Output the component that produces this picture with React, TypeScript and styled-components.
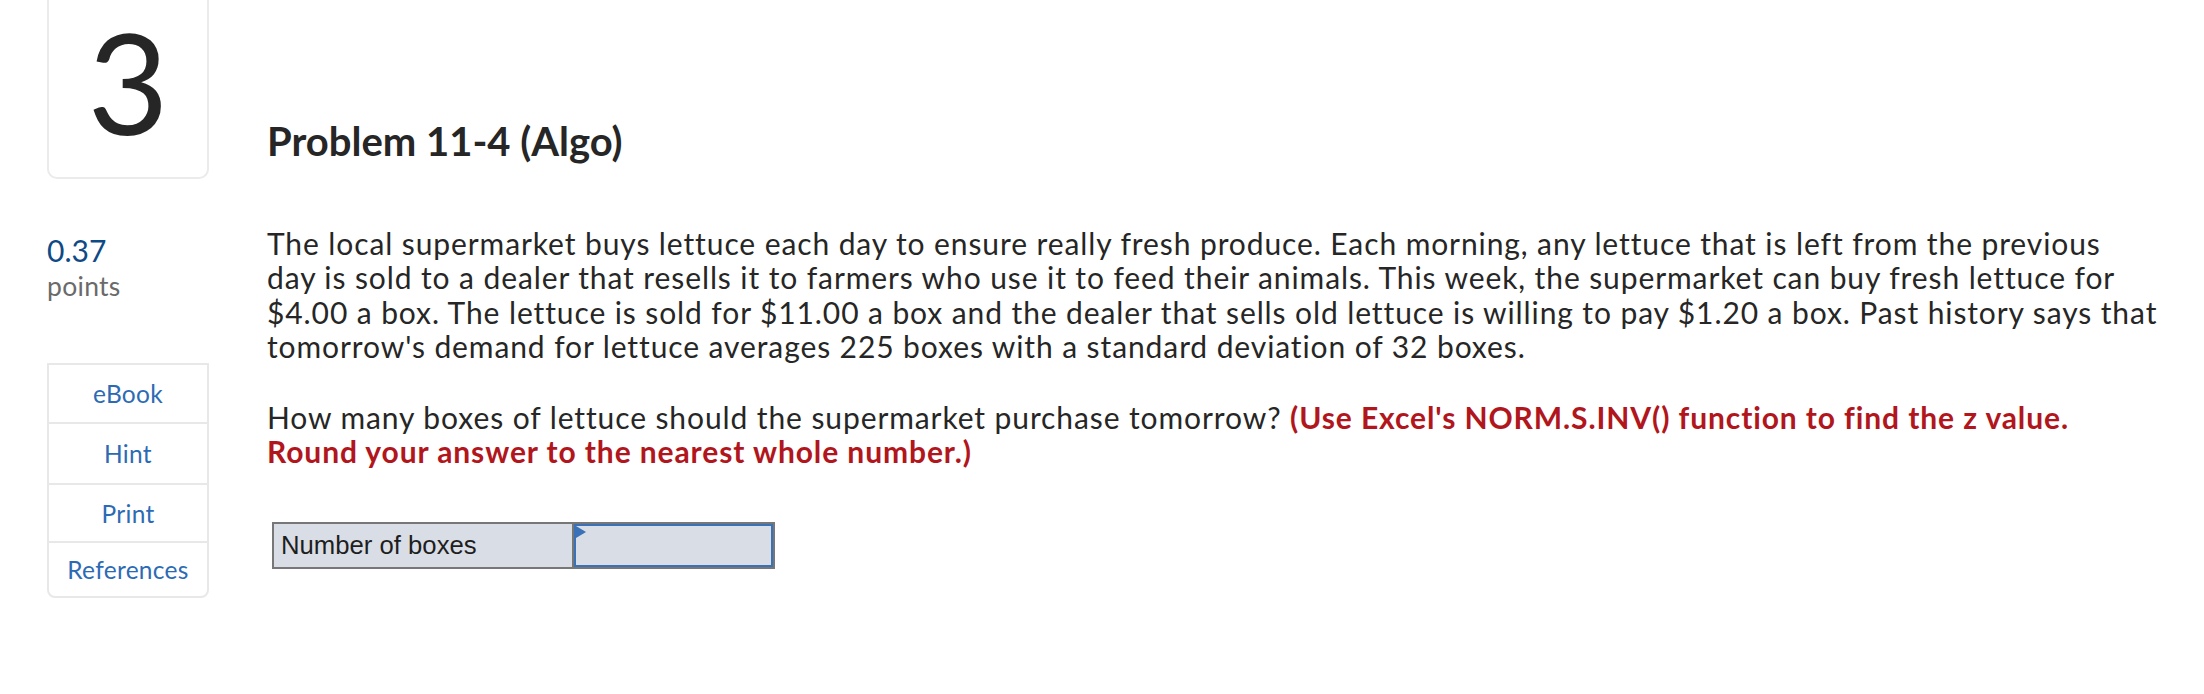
import React from "react";
import styled, { createGlobalStyle } from "styled-components";

const Global = createGlobalStyle`
  html, body { margin: 0; padding: 0; background: #ffffff; }
  body { font-family: Lato, "Open Sans", sans-serif; color: #262626; }
`;

const Page = styled.div`
  display: grid;
  grid-template-columns: 162px 1fr;
  column-gap: 58px;
  padding: 0 10px 0 47px;
  width: 2204px;
  box-sizing: border-box;
`;

const NumberCard = styled.div`
  height: 179px;
  box-sizing: border-box;
  border: 2px solid #ebebeb;
  border-top: none;
  border-radius: 0 0 10px 10px;
  display: flex;
  justify-content: center;
  padding-top: 11px;
  font-size: 140px;
  line-height: 140px;
  font-weight: 400;
  color: #262626;
`;

const Title = styled.h1`
  margin: 0;
  padding-top: 117px;
  font-size: 40px;
  line-height: 48px;
  font-weight: 700;
  color: #262626;
`;

const Sidebar = styled.aside`
  padding-top: 54px;
  display: flex;
  flex-direction: column;
`;

const Score = styled.div`
  font-size: 30px;
  line-height: 34px;
  color: #0e4a86;
`;

const ScoreUnit = styled.div`
  margin-top: 4px;
  font-size: 26.5px;
  line-height: 30px;
  letter-spacing: 0.3px;
  color: #6a6a6a;
`;

const ToolList = styled.nav`
  margin-top: 62px;
  border: 2px solid #e8e8e8;
  border-radius: 0 0 8px 8px;
  display: flex;
  flex-direction: column;
`;

const ToolButton = styled.a<{ $h: number }>`
  height: ${(p) => p.$h}px;
  display: flex;
  align-items: center;
  justify-content: center;
  font-size: 24.5px;
  letter-spacing: 0.3px;
  color: #2c6bb4;
  text-decoration: none;
  & + & {
    border-top: 2px solid #e8e8e8;
  }
`;

const Content = styled.main`
  padding-top: 47px;
`;

const Para = styled.p<{ $gap: number }>`
  margin: 0 0 ${(p) => p.$gap}px 0;
  font-size: 30px;
  line-height: 34.3px;
  letter-spacing: 0.9px;
  white-space: nowrap;
  color: #262626;
`;

const Emph = styled.strong`
  color: #b1161d;
  font-weight: 700;
`;

const AnswerTable = styled.table`
  margin-left: 5px;
  border-collapse: collapse;
  border: 2px solid #777777;
  font-family: "Liberation Sans", Arial, sans-serif;
  font-size: 25.7px;
  color: #1e1e1e;
`;

const LabelCell = styled.td`
  width: 300px;
  height: 43px;
  box-sizing: border-box;
  padding: 0 0 0 7px;
  background: #d9dde5;
  border-right: 2px solid #777777;
`;

const InputCell = styled.td`
  width: 199px;
  padding: 0;
  background: #d9dde5;
  position: relative;
`;

const AnswerInput = styled.input`
  display: block;
  width: 199px;
  height: 43px;
  box-sizing: border-box;
  border: 2px solid #3a72b8;
  background: #d9dde5;
  outline: none;
  margin: 0;
`;

const Flag = styled.span`
  position: absolute;
  left: 2px;
  top: 2px;
  width: 0;
  height: 0;
  border-top: 6.5px solid transparent;
  border-bottom: 6.5px solid transparent;
  border-left: 10px solid #3a72b8;
`;

export default function App() {
  return (
    <>
      <Global />
      <Page>
        <NumberCard>3</NumberCard>
        <Title>Problem 11-4 (Algo)</Title>
        <Sidebar>
          <Score>0.37</Score>
          <ScoreUnit>points</ScoreUnit>
          <ToolList>
            <ToolButton $h={57}>eBook</ToolButton>
            <ToolButton $h={59}>Hint</ToolButton>
            <ToolButton $h={56}>Print</ToolButton>
            <ToolButton $h={53}>References</ToolButton>
          </ToolList>
        </Sidebar>
        <Content>
          <Para $gap={36.8}>
            The local supermarket buys lettuce each day to ensure really fresh produce. Each morning, any lettuce that
            is left from the previous
            <br />
            day is sold to a dealer that resells it to farmers who use it to feed their animals. This week, the
            supermarket can buy fresh lettuce for
            <br />
            $4.00 a box. The lettuce is sold for $11.00 a box and the dealer that sells old lettuce is willing to pay
            $1.20 a box. Past history says that
            <br />
            tomorrow's demand for lettuce averages 225 boxes with a standard deviation of 32 boxes.
          </Para>
          <Para $gap={53.8}>
            How many boxes of lettuce should the supermarket purchase tomorrow?{" "}
            <Emph>
              (Use Excel's NORM.S.INV() function to find the z value.
              <br />
              Round your answer to the nearest whole number.)
            </Emph>
          </Para>
          <AnswerTable>
            <tbody>
              <tr>
                <LabelCell>Number of boxes</LabelCell>
                <InputCell>
                  <AnswerInput type="text" aria-label="Number of boxes" />
                  <Flag />
                </InputCell>
              </tr>
            </tbody>
          </AnswerTable>
        </Content>
      </Page>
    </>
  );
}
